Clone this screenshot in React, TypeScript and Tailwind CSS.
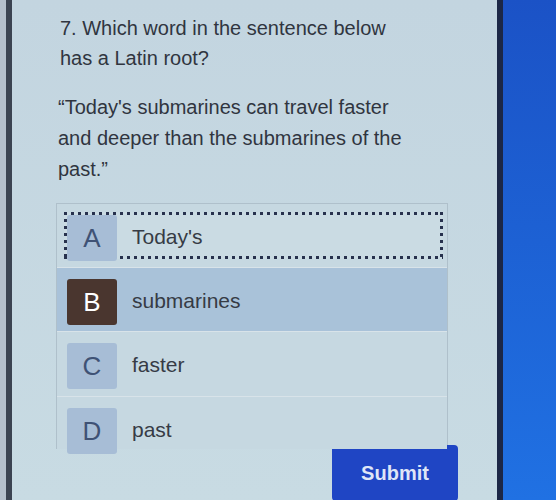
import React from 'react';

type Choice = { letter: string; word: string };

const choices: Choice[] = [
  { letter: 'A', word: "Today's" },
  { letter: 'B', word: 'submarines' },
  { letter: 'C', word: 'faster' },
  { letter: 'D', word: 'past' },
];

// focus ring drawn as spaced square dots, wider apart than border-dotted gives
function FocusRing() {
  return (
    <div className="absolute left-[7px] top-[8px] right-[4px] bottom-[8px] bg-[#cadbe3]">
      <div className="absolute left-0 right-0 top-0 h-[3px] bg-[linear-gradient(to_right,#27314d_40%,transparent_40%)] bg-[length:7px_3px]" />
      <div className="absolute left-0 right-0 bottom-0 h-[3px] bg-[linear-gradient(to_right,#27314d_40%,transparent_40%)] bg-[length:7px_3px]" />
      <div className="absolute top-0 bottom-0 left-0 w-[3px] bg-[linear-gradient(to_bottom,#27314d_40%,transparent_40%)] bg-[length:3px_7px]" />
      <div className="absolute top-0 bottom-0 right-0 w-[3px] bg-[linear-gradient(to_bottom,#27314d_40%,transparent_40%)] bg-[length:3px_7px]" />
    </div>
  );
}

function ChoiceRow({ choice, index }: { choice: Choice; index: number }) {
  const focused = index === 0;
  const selected = index === 1;
  const heights = ['h-[63px]', 'h-[64px]', 'h-[65px]', 'h-[53px]'];

  return (
    <div
      className={`relative flex items-start pl-[10px] pt-[11px] ${heights[index]} ${
        selected ? 'bg-[#a9c2d9]' : 'bg-[#c6d8e1]'
      } ${index > 0 ? 'border-t border-[#d8e3e9]' : ''}`}
    >
      {focused && <FocusRing />}
      <div
        className={`relative z-10 flex h-[46px] w-[50px] items-center justify-center rounded-[3px] text-[26px] ${
          selected ? 'bg-[#4a362f] text-white' : 'bg-[#a7bdd6] text-[#3f5275]'
        }`}
      >
        {choice.letter}
      </div>
      <div className="relative z-10 ml-[15px] mt-[7px] text-[21px] leading-[30px] text-[#363b45]">
        {choice.word}
      </div>
    </div>
  );
}

export default function App() {
  return (
    <div
      className="flex h-[500px] w-[556px] overflow-hidden"
      style={{ fontFamily: '"Liberation Sans", Arial, sans-serif' }}
    >
      <div className="w-[6px] bg-[#b4bfcb]" />
      <div className="w-[6px] bg-[#3b4351]" />

      <div className="flex-1 bg-gradient-to-b from-[#c3d5e0] to-[#c8dbe3]">
        <div className="pl-[48px] pt-[13px] text-[20px] leading-[30px] text-[#30353f]">
          <p>
            7. Which word in the sentence below
            <br />
            has a Latin root?
          </p>
          <p className="mt-[19px] -ml-[2px] leading-[31px]">
            “Today's submarines can travel faster
            <br />
            and deeper than the submarines of the
            <br />
            past.”
          </p>
        </div>

        <div className="ml-[44px] mt-[18px] w-[392px] border-x border-t border-[#afc0cb]">
          {choices.map((c, i) => (
            <ChoiceRow key={c.letter} choice={c} index={i} />
          ))}
        </div>

        <div className="-mt-[4px] ml-[320px]">
          <button className="flex h-[56px] w-[126px] items-center justify-center rounded-[4px] bg-[#1f45c4] text-[20px] font-bold text-[#dfe6f7]">
            Submit
          </button>
        </div>
      </div>

      <div className="w-[6px] bg-[#1c2746]" />
      <div className="w-[53px] bg-gradient-to-b from-[#1b52c6] to-[#2071e3]" />
    </div>
  );
}
